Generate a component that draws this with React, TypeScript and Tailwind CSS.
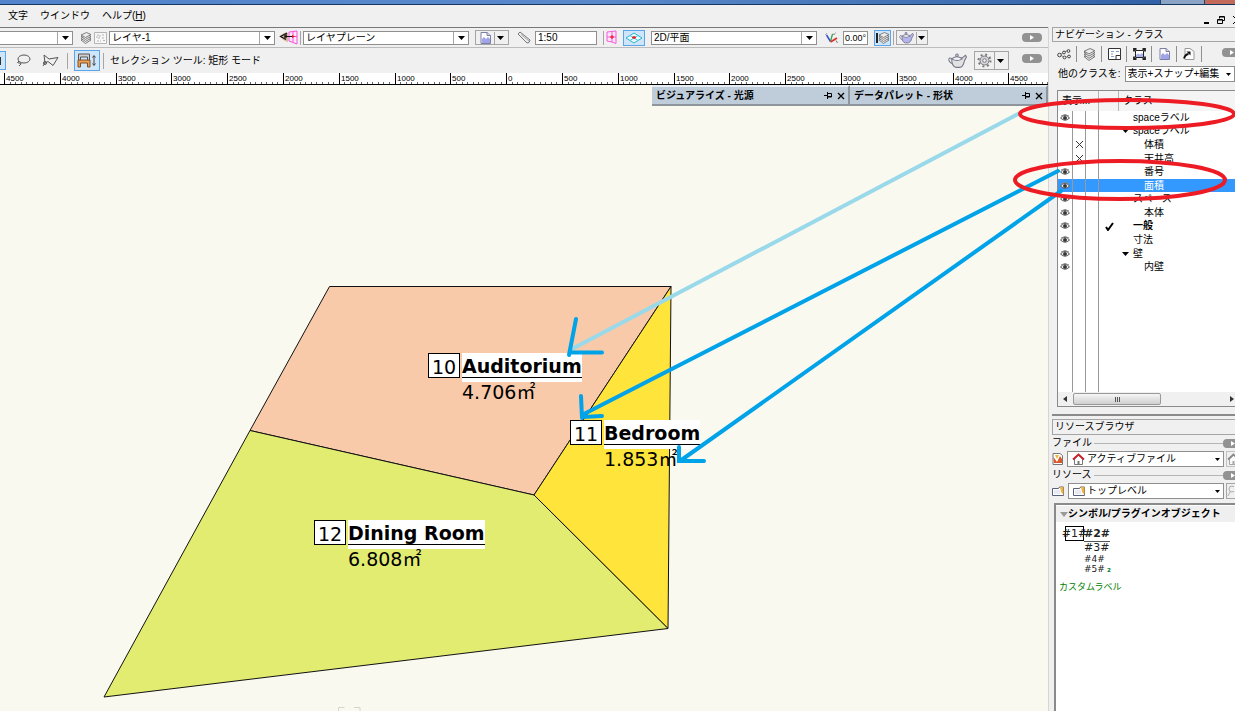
import type { ReactNode } from 'react'

interface Room {
  number: string
  name: string
  area: string
  place: string
}

interface ClassRow {
  name: string
  level: number
  state: 'eye' | 'hidden' | 'none'
  open?: boolean
  active?: boolean
  selected?: boolean
}

const rooms: Room[] = [
  { number: '10', name: 'Auditorium', area: '4.706', place: 'left-[428px] top-[268px]' },
  { number: '11', name: 'Bedroom', area: '1.853', place: 'left-[570px] top-[335px]' },
  { number: '12', name: 'Dining Room', area: '6.808', place: 'left-[314px] top-[435px]' },
]

const classes: ClassRow[] = [
  { name: 'spaceラベル', level: 1, state: 'eye' },
  { name: 'spaceラベル', level: 1, state: 'none', open: true },
  { name: '体積', level: 2, state: 'hidden' },
  { name: '天井高', level: 2, state: 'hidden' },
  { name: '番号', level: 2, state: 'eye' },
  { name: '面積', level: 2, state: 'eye', selected: true },
  { name: 'スペース', level: 1, state: 'eye' },
  { name: '本体', level: 2, state: 'eye' },
  { name: '一般', level: 1, state: 'eye', active: true },
  { name: '寸法', level: 1, state: 'eye' },
  { name: '壁', level: 1, state: 'eye', open: true },
  { name: '内壁', level: 2, state: 'eye' },
]

const rulerLabels = [4500, 4000, 3500, 3000, 2500, 2000, 1500, 1000, 500, 0, 500, 1000, 1500, 2000, 2500, 3000, 3500, 4000, 4500]
const rulerStep = 55.8

function Down({ small }: { small?: boolean }) {
  return (
    <svg width={small ? 5 : 7} height={small ? 3 : 4} viewBox="0 0 7 4" className="shrink-0">
      <path d="M0 0h7L3.5 4z" fill="#000" />
    </svg>
  )
}

function Sep({ className = '' }: { className?: string }) {
  return <span className={`w-px shrink-0 bg-[#a5a5a5] ${className}`} />
}

function Combo({ label, value, className = '', icon, plain }: { label: string; value: string; className?: string; icon?: ReactNode; plain?: boolean }) {
  return (
    <div className={`relative flex items-center border border-[#8f8f8f] bg-white ${className}`}>
      {icon && <span className="ml-1 shrink-0">{icon}</span>}
      <select aria-label={label} className="h-full w-full min-w-0 appearance-none bg-transparent pl-[2px] pr-3 outline-none">
        <option>{value}</option>
      </select>
      <span className={`pointer-events-none absolute inset-y-0 right-0 flex items-center justify-center ${plain ? 'w-3' : 'w-[15px] border-l border-[#a5a5a5]'}`}>
        <Down small={plain} />
      </span>
    </div>
  )
}

function Pill({ className = '' }: { className?: string }) {
  return (
    <button aria-label="展開" className={`flex h-[9px] w-5 shrink-0 items-center justify-center rounded-[4px] bg-[#929292] ${className}`}>
      <svg width="4" height="5" viewBox="0 0 4 5"><path d="M0 0l4 2.5L0 5z" fill="#fff" /></svg>
    </button>
  )
}

function LayersIcon({ size = 12 }: { size?: number }) {
  return (
    <svg width={size} height={size} viewBox="0 0 12 12" fill="#ececec" stroke="#666" strokeWidth=".8">
      <path d="M1 8l6-2.500 4 2.500-5.500 3.500z" />
      <path d="M1 6.200l6-2.500 4 2.500-5.500 3.300z" />
      <path d="M1 4.400l6-2.500 4 2.500-5.500 3z" />
      <path d="M1 3l5.500-2.500L11 2.500 5.500 5.500z" />
    </svg>
  )
}

function SheetIcon() {
  return (
    <svg width="13" height="12" viewBox="0 0 13 12" fill="none" stroke="#b5b5b5">
      <path d="M.5.5h12v11H.5z" fill="#f7f7f7" />
      <path d="M3 3h3v3H3zM8 3h2M8 6h3M3 9h4M9 8.500h3" strokeDasharray="2 1" />
    </svg>
  )
}

function EyePlaneIcon() {
  return (
    <svg width="20" height="15" viewBox="0 0 20 15" fill="none">
      <path d="M1 6q4-5 8-3v9q-5-1-8-6z" fill="#d9b99b" />
      <path d="M10 2l8-1v13l-8-3zM14 1.500V12M10 6.500h8" stroke="#f552d8" fill="#ffe6fb" />
      <path d="M8 3L1.500 6.500 7 9.500" stroke="#111" strokeWidth="1.200" />
      <ellipse cx="6.500" cy="6" rx="1.500" ry="2.500" fill="#333" />
      <path d="M6 6.500h8" stroke="#111" /><path d="M13 5l3 1.500L13 8z" fill="#e11" />
    </svg>
  )
}

function DocIcon() {
  return (
    <svg width="11" height="12" viewBox="0 0 11 12">
      <path d="M1 .5h6l3.500 3v8H1z" fill="#fff" stroke="#7c7fa0" />
      <path d="M2 7l2-2 2 2 2-2 2 2v4H2z" fill="#9fa5e8" />
      <path d="M7 .5v3h3.500" fill="#d6d9ef" stroke="#7c7fa0" />
    </svg>
  )
}

function ScaleIcon() {
  return (
    <svg width="14" height="13" viewBox="0 0 14 13" fill="#eee" stroke="#777">
      <path d="M1 3l2-2 10 8-1 2.500-2 .5z" /><path d="M4 3.500l8 6.500" stroke="#aaa" />
    </svg>
  )
}

function PinkPlaneIcon() {
  return (
    <svg width="11" height="15" viewBox="0 0 11 15" fill="#ffe6fb" stroke="#f25bdc">
      <path d="M1 2l9-1v12.500l-4-1.500-5-1zM6 1.500v10.500M1 7h9" /><path d="M4 7h4M6 5v4" stroke="#e11" />
    </svg>
  )
}

function WorkPlaneIcon() {
  return (
    <svg width="18" height="12" viewBox="0 0 18 12">
      <path d="M9 1l8 5-8 5-8-5z" fill="#e7fbff" stroke="#2ab4d4" />
      <path d="M5 3.500l8 5M13 3.500l-8 5" stroke="#49c4e0" /><path d="M7 5.500h4M9 4v3" stroke="#d22" strokeWidth="1.300" />
    </svg>
  )
}

function AxesIcon() {
  return (
    <svg width="13" height="12" viewBox="0 0 13 12" fill="none">
      <path d="M5.500 9.500L1.500 3" stroke="#3a4fc8" strokeWidth="1.500" />
      <path d="M5.500 9.500L7.500 2" stroke="#27a244" strokeWidth="1.200" />
      <path d="M.5 3l1.500-2M8 1.500l1 1.500 1.500-2.500" stroke="#888" strokeWidth=".8" />
      <path d="M5.500 10l6.500-4" stroke="#d33" strokeWidth="2" /><path d="M11 8.500l1.500 2.500" stroke="#777" />
    </svg>
  )
}

function Teapot({ fill = '#b4b4ee', size = 15 }: { fill?: string; size?: number }) {
  return (
    <svg width={size} height={size - 2} viewBox="0 0 18 15" stroke="#77778a" fill={fill}>
      <path d="M4 6Q1 4 .8 6.500T5 11" fill="none" />
      <path d="M3.500 6q0 7 4 8h4q3-1 4-6l2-4-1-1.500-3 2.500z" />
      <path d="M3.500 6q5-4 10 0-5 3-10 0z" fill="#f2f2f8" /><circle cx="8.500" cy="2.500" r="1.200" />
    </svg>
  )
}

function GearIcon() {
  return (
    <svg width="15" height="15" viewBox="0 0 15 15" fill="none" stroke="#77777d">
      <circle cx="7.500" cy="7.500" r="6" strokeWidth="2" strokeDasharray="1.900 2.812" />
      <circle cx="7.500" cy="7.500" r="4.500" fill="#d5d5da" /><circle cx="7.500" cy="7.500" r="1.800" fill="#f7f7f7" />
    </svg>
  )
}

function Eye() {
  return (
    <svg width="10" height="8" viewBox="0 0 10 8" fill="none" stroke="#555" className="mx-auto">
      <path d="M.5 4Q5-1.500 9.500 4 5 8.500.5 4z" fill="#ececec" /><circle cx="5" cy="4" r="1.600" fill="#333" /><path d="M1 2q4-3 8 0" stroke="#888" />
    </svg>
  )
}

function Folder() {
  return (
    <svg width="12" height="10" viewBox="0 0 12 10">
      <path d="M.5 2.500h6l1-1.500h4v8.500H.5z" fill="#fff" stroke="#58607c" /><path d="M8 1h3.500v8L9 6z" fill="#efb442" /><path d="M2 4h6v4H2z" fill="#e7e9f4" />
    </svg>
  )
}

function House() {
  return (
    <svg width="13" height="12" viewBox="0 0 13 12">
      <path d="M2.500 6v5.500h8V6L6.500 2z" fill="#fff" stroke="#777" /><path d="M1 6.500l5.500-5 5.500 5" fill="none" stroke="#c9202a" strokeWidth="1.800" /><path d="M5.500 8h2v3.500h-2z" fill="#777" />
    </svg>
  )
}

function Palette({ title, className }: { title: string; className: string }) {
  return (
    <div className={`flex items-center border-b-2 border-r-2 border-t-2 border-b-[#8e959c] border-r-[#8e959c] border-t-[#e8edf2] bg-[#bfcddb] pl-1 pr-[3px] text-[10px] font-bold ${className}`}>
      <span className="flex-1 whitespace-nowrap">{title}</span>
      <button aria-label="ピン">
        <svg width="9" height="7" viewBox="0 0 9 7" fill="none" stroke="#000"><path d="M0 3.500h3M3.500 0v7M3.500 1.500h4v3.500h-4M4 4.500h4" /></svg>
      </button>
      <button aria-label="閉じる" className="ml-1">
        <svg width="8" height="8" viewBox="0 0 8 8" stroke="#000" strokeWidth="1.300"><path d="M1 1l6 6M7 1L1 7" /></svg>
      </button>
    </div>
  )
}

function Toolbar() {
  return (
    <div className="flex h-5 items-center border-b border-[#bcbcbc]">
      <Combo label="クラス" value="" className="h-[14px] w-[73px] border-l-0" />
      <span className="ml-[7px]"><LayersIcon /></span>
      <span className="ml-[2px]"><SheetIcon /></span>
      <Combo label="レイヤ" value="レイヤ-1" className="ml-[2px] h-[14px] w-[166px]" />
      <span className="ml-1"><EyePlaneIcon /></span>
      <Sep className="ml-px h-[14px]" />
      <Combo label="プレーン" value="レイヤプレーン" className="ml-[2px] h-[14px] w-[166px]" />
      <button aria-label="ビュー" className="ml-[6px] flex h-[15px] w-[34px] items-center justify-between border border-[#a5a5a5] pl-1 pr-1">
        <DocIcon /><Sep className="h-3" /><Down />
      </button>
      <span className="ml-2"><ScaleIcon /></span>
      <input aria-label="縮尺" defaultValue="1:50" className="ml-1 h-[14px] w-[62px] border border-[#8f8f8f] bg-white pl-[2px] outline-none" />
      <Sep className="ml-[6px] h-[14px]" />
      <span className="ml-[2px]"><PinkPlaneIcon /></span>
      <button aria-label="ワーキングプレーン" className="ml-[6px] flex h-4 w-[22px] items-center justify-center border border-[#5aa5ea] bg-[#cfe5fa]"><WorkPlaneIcon /></button>
      <Combo label="投影" value="2D/平面" className="ml-[6px] h-[14px] w-[166px]" />
      <span className="ml-2"><AxesIcon /></span>
      <input aria-label="角度" defaultValue="0.00°" className="ml-[5px] h-[14px] w-[25px] border border-[#8f8f8f] bg-white pl-px text-[9px] outline-none" />
      <button aria-label="重ね" className="ml-[6px] flex h-4 w-[17px] items-center justify-center border border-[#5aa5ea] bg-[#cfe5fa]">
        <span className="h-[10px] w-[2px] bg-[#222]" /><LayersIcon size={12} />
      </button>
      <Sep className="ml-[2px] h-[14px]" />
      <button aria-label="レンダリング" className="ml-[2px] flex h-[15px] w-[32px] items-center justify-between border border-[#a5a5a5] px-[2px]">
        <Teapot size={15} /><Sep className="h-3" /><Down />
      </button>
      <Pill className="ml-auto mr-[6px]" />
    </div>
  )
}

function ModeBar() {
  return (
    <div className="flex h-[25px] items-center">
      <button aria-label="単一選択" className="flex h-[19px] w-[6px] items-center border border-l-0 border-[#5aa5ea] bg-[#cfe5fa]"><span className="h-2 w-px bg-[#333]" /></button>
      <button aria-label="投げ縄" className="ml-[10px]">
        <svg width="15" height="13" viewBox="0 0 15 13" fill="none" stroke="#555"><ellipse cx="8" cy="5" rx="6" ry="4" /><path d="M3 7q-3 2 0 2t2 1-2 2" /></svg>
      </button>
      <button aria-label="多角形選択" className="ml-[11px]">
        <svg width="17" height="13" viewBox="0 0 17 13" fill="none" stroke="#555"><path d="M3 9L2 1l5 4 9-1.500-5 8-5-4-3 1.500-2 3" /><circle cx="3" cy="9" r="1.500" /></svg>
      </button>
      <Sep className="ml-2 h-4" />
      <button aria-label="矩形モード" className="ml-[6px] flex h-[21px] w-[26px] items-center justify-center border border-[#5aa5ea] bg-[#cfe5fa]">
        <svg width="20" height="15" viewBox="0 0 20 15" fill="none">
          <path d="M1.500 1h11v7h-2V4h-7v4h-2z" fill="#cfcfcf" stroke="#555" />
          <path d="M1 7h12v7h-2.500v-4h-7v4H1z" fill="#f0a050" stroke="#7a5230" />
          <path d="M17 3v9M15.500 4.500L17 2.500l1.500 2M15.500 10.500l1.500 2 1.500-2" stroke="#444" />
        </svg>
      </button>
      <Sep className="ml-[3px] h-4" />
      <span className="ml-[6px] whitespace-nowrap">セレクション ツール: 矩形 モード</span>
      <span className="ml-auto"><Teapot fill="#e2e2e2" size={19} /></span>
      <button aria-label="設定" className="ml-[7px] flex h-[19px] w-[35px] items-center justify-between border border-[#a5a5a5] pl-[2px] pr-1">
        <GearIcon /><Sep className="h-[17px]" /><Down />
      </button>
      <Pill className="mb-1 ml-[13px] mr-[6px]" />
    </div>
  )
}

function Ruler() {
  return (
    <svg className="block h-3 w-full bg-white" fontFamily="Liberation Sans, sans-serif" fontSize="8">
      {Array.from({ length: 190 }, (_, i) => (
        <path key={i} d={`M${Math.round(4 + i * (rulerStep / 10)) + 0.5} 9v2`} stroke="#666" />
      ))}
      {rulerLabels.map((label, i) => {
        const x = Math.round(4 + i * rulerStep)
        return (
          <g key={i}>
            <path d={`M${x + 0.5} 0v11`} stroke="#000" />
            <text x={x + 2} y="8">{label}</text>
          </g>
        )
      })}
      <rect y="11" width="100%" height="1" />
    </svg>
  )
}

function Drawing() {
  return (
    <section className="relative min-h-0 flex-1 overflow-hidden bg-[#f9f9f0]">
      <svg className="absolute inset-0 h-full w-full" stroke="#111" strokeWidth="1">
        <path d="M329.500 201.500H671L534 410 250 345.500z" fill="#f8caaa" />
        <path d="M671 201.500L668 543.500 534 410z" fill="#ffe53b" />
        <path d="M250 345.500L534 410l134 133.500L104 612z" fill="#e2ec70" />
        <path d="M338.500 626v-3.500h6M354 622.500h6v3.500" fill="none" stroke="#d5d5ce" />
      </svg>
      {rooms.map((room) => (
        <div key={room.number} className={`absolute flex gap-[2px] font-["DejaVu_Sans","Noto_Sans_CJK_JP",sans-serif] text-[19px] ${room.place}`}>
          <span className="flex h-[25px] w-8 items-center justify-center border border-black bg-white pt-[2px] leading-5">{room.number}</span>
          <div className="whitespace-nowrap">
            <div className="h-[29px] bg-white pt-[2px]">
              <div className="border-b border-black font-bold leading-[22px]">{room.name}</div>
            </div>
            <div className="h-5 leading-[18px]">
              {room.area}<span className='font-["Noto_Sans_CJK_JP",sans-serif]'>㎡</span>
            </div>
          </div>
        </div>
      ))}
      <div className="absolute right-0 top-0 flex h-[21px]">
        <Palette title="ビジュアライズ - 光源" className="w-[198px]" />
        <Palette title="データパレット - 形状" className="w-[198px]" />
      </div>
    </section>
  )
}

function ClassTable() {
  return (
    <div className="ml-[5px] flex h-[317px] flex-col border-l border-t border-[#8a8a8a] bg-white">
      <table className="h-[183px] w-full table-fixed border-separate border-spacing-0 text-left text-[10px] leading-3">
        <colgroup>
          <col className="w-[15px]" /><col className="w-[13px]" /><col className="w-[13px]" /><col className="w-5" /><col />
        </colgroup>
        <thead>
          <tr className="h-5 bg-[#f4f4f4]">
            <th colSpan={3} className="border-r border-[#b5b5b5] p-0 pl-1 font-normal">表示...</th>
            <th className="border-r border-[#b5b5b5] p-0" />
            <th className="p-0 pl-1 font-normal">クラス</th>
          </tr>
        </thead>
        <tbody>
          {classes.map((row, i) => (
            <tr key={i} className={row.selected ? 'bg-[#3399ff] text-white' : ''}>
              <td className="border-r border-[#999] p-0">{row.state === 'eye' && <Eye />}</td>
              <td className="border-r border-[#999] p-0">
                {row.state === 'hidden' && (
                  <svg width="7" height="7" viewBox="0 0 7 7" stroke="#333" className="mx-auto"><path d="M0 0l7 7M7 0L0 7" /></svg>
                )}
              </td>
              <td className="border-r border-[#999] p-0" />
              <td className="p-0">
                {row.active && (
                  <svg width="9" height="9" viewBox="0 0 9 9" fill="none" stroke="#000" strokeWidth="2" className="mx-auto"><path d="M1 5l2 3 5-7" /></svg>
                )}
              </td>
              <td className="p-0">
                <span className={`flex items-center ${row.level === 2 ? 'pl-[25px]' : 'pl-[3px]'} ${row.active ? 'font-bold' : ''}`}>
                  {row.level === 1 && <span className="w-[11px]">{row.open && <Down />}</span>}
                  {row.name}
                </span>
              </td>
            </tr>
          ))}
        </tbody>
      </table>
      <div className="flex flex-1">
        <span className="w-[15px] border-r border-[#999]" />
        <span className="w-[13px] border-r border-[#999]" />
        <span className="w-[13px] border-r border-[#999]" />
      </div>
      <div className="flex h-[14px] items-center bg-[#f0f0f0] px-[5px]">
        <svg width="4" height="6" viewBox="0 0 4 6"><path d="M4 0v6L0 3z" fill="#333" /></svg>
        <span className="ml-[6px] flex h-3 w-[88px] items-center justify-center gap-px rounded-[2px] border border-[#999] bg-gradient-to-b from-[#f6f6f6] to-[#cfcfcf]">
          <i className="h-[5px] w-px bg-[#555]" /><i className="h-[5px] w-px bg-[#555]" /><i className="h-[5px] w-px bg-[#555]" />
        </span>
        <svg width="4" height="6" viewBox="0 0 4 6" className="ml-auto mr-[-4px]"><path d="M0 0v6l4-3z" fill="#333" /></svg>
      </div>
      <div className="h-px bg-[#8a8a8a]" />
    </div>
  )
}

function NavTabs() {
  const tabs: { label: string; icon: ReactNode }[] = [
    { label: 'クラス', icon: <svg width="14" height="11" viewBox="0 0 14 11" fill="#eee" stroke="#444"><path d="M3 6l4-3 4-1.500M3 6l5 2.500 4-1.500" fill="none" stroke="#888" /><circle cx="2.500" cy="6" r="1.800" /><circle cx="7" cy="3.500" r="1.400" /><circle cx="11.500" cy="2" r="1.400" /><circle cx="7.500" cy="8.500" r="1.400" /><circle cx="12" cy="7.500" r="1.400" /></svg> },
    { label: 'レイヤ', icon: <LayersIcon size={13} /> },
    { label: 'シート', icon: <svg width="13" height="12" viewBox="0 0 13 12" fill="#fff" stroke="#333"><path d="M.5.5h12v11H.5z" /><path d="M3 3.500h3M8 3.500h3M3 6h2M3 8.500h3" stroke="#7ba3cf" /><path d="M8 7.500h4.500v4H8z" /></svg> },
    { label: 'ビューポート', icon: <svg width="13" height="12" viewBox="0 0 13 12" fill="none" stroke="#222"><path d="M2.500 2.500h8v7h-8z" fill="#fff" /><path d="M3 9V7l2-1.500 2 1 2-1.500 1 1v3z" fill="#a9b0ea" stroke="none" /><path d="M1 3.500V1h2.500M9.500 1H12v2.500M12 8.500V11H9.500M3.500 11H1V8.500" strokeWidth="1.800" /></svg> },
    { label: '登録画面', icon: <DocIcon /> },
    { label: '参照', icon: <svg width="12" height="12" viewBox="0 0 12 12" fill="none" stroke="#999"><path d="M2 .5h5l4 3v8H2z" fill="#fff" /><path d="M1 10.500q1-4 4.500-4.500" stroke="#111" strokeWidth="1.800" /><path d="M3.500 3.500h4v4z" fill="#111" stroke="none" /></svg> },
  ]
  return (
    <div className="flex h-[24px] items-center">
      {tabs.map((tab) => (
        <button key={tab.label} aria-label={tab.label} className="flex h-4 w-[25px] shrink-0 items-center justify-center border-r border-[#8f8f8f]">{tab.icon}</button>
      ))}
      <Pill className="mb-1 ml-5" />
    </div>
  )
}

function GroupLine({ title }: { title: string }) {
  return (
    <div className="flex h-4 items-center whitespace-nowrap">
      {title}
      <span className="ml-[2px] h-px flex-1 bg-[#b5b5b5]" />
      <Pill className="mr-[-8px]" />
    </div>
  )
}

function ResourceBrowser() {
  return (
    <>
      <div className="mt-[7px] border-t-2 border-[#8a8a8a] pt-[3px]">
        <h2 className="h-4 whitespace-nowrap border border-r-0 border-[#a5a5a5] pl-[2px] leading-[14px]">リソースブラウザ</h2>
      </div>
      <GroupLine title="ファイル" />
      <div className="flex h-4 items-center">
        <svg width="11" height="12" viewBox="0 0 11 12"><path d="M1 .5h7l2.500 2v9H1z" fill="#fff" stroke="#777" /><path d="M1.500 4L5 9l3-6 2 3v4H2z" fill="#d7582a" /><path d="M3 2l2 4 2-4z" fill="#f1b938" /></svg>
        <Combo label="ファイル" value="アクティブファイル" icon={<House />} plain className="ml-1 h-4 flex-1" />
        <button aria-label="ホーム" className="ml-[2px] h-4 w-[9px] overflow-hidden border border-r-0 border-[#a5a5a5] opacity-60 grayscale"><House /></button>
      </div>
      <GroupLine title="リソース" />
      <div className="flex h-4 items-center">
        <Folder />
        <Combo label="リソース" value="トップレベル" icon={<Folder />} plain className="ml-1 h-4 flex-1" />
        <button aria-label="検索" className="ml-[2px] h-4 w-[9px] border border-r-0 border-[#a5a5a5]">
          <svg width="7" height="12" viewBox="0 0 7 12" fill="none" stroke="#aaa"><circle cx="5" cy="4" r="3" /><path d="M3 7l-2 4" /></svg>
        </button>
      </div>
      <div className="ml-[2px] mt-1 flex-1 border-l-2 border-t-2 border-[#8a8a8a] bg-white pt-px">
        <h3 className="flex h-4 items-center whitespace-nowrap bg-[#efefef] pl-1 font-bold">
          <svg width="8" height="5" viewBox="0 0 8 5"><path d="M0 0h8L4 5z" fill="#999" /></svg>
          シンボル/プラグインオブジェクト
        </h3>
        <div className="flex pl-[9px] pt-1 font-['DejaVu_Sans',sans-serif] text-[#222]">
          <span className="flex h-[15px] w-[19px] items-center justify-center border border-black text-[11px]">#1#</span>
          <div className="flex flex-col items-start">
            <span className="border-b border-[#555] text-[11px] font-bold leading-[15px]">#2#</span>
            <span className="text-[11px] leading-3">#3#</span>
            <span className="text-[9px] leading-[10px]">#4#</span>
            <span className="text-[9px] leading-[10px]">#5#</span>
          </div>
          <span className="self-end text-[9px] font-bold leading-[9px] text-green-700 ml-[-3px]">₂</span>
        </div>
        <p className="whitespace-nowrap pl-[3px] pt-[7px] text-[9px] text-[#008000]">カスタムラベル</p>
      </div>
    </>
  )
}

// Ellipses and arrows that tie the class rows to the room labels
function Markup() {
  return (
    <svg className="pointer-events-none absolute inset-0 h-full w-full" fill="none" strokeLinecap="round">
      <path d="M1018 114L572 349" stroke="#99d9ea" strokeWidth="4" />
      <g stroke="#00a2e8" strokeWidth="4">
        <path d="M576 319l-7 36M571 352.500h31" />
        <path d="M1058 171L582 415M581 396l1 22M582 417l20-1" />
        <path d="M1061 191L680 461M679 447v14h25" />
      </g>
      <g stroke="#ed1c24" strokeWidth="4">
        <ellipse cx="1127" cy="114" rx="107" ry="14" />
        <ellipse cx="1120" cy="180" rx="105" ry="19" />
      </g>
    </svg>
  )
}

export default function App() {
  return (
    <div className='relative flex h-screen flex-col overflow-hidden bg-[#f0f0f0] font-["Liberation_Sans","Noto_Sans_CJK_JP",sans-serif] text-[10px] leading-3 text-black'>
      <div className="flex h-[5px] justify-end border-b border-[#17365f] bg-gradient-to-r from-[#5184cc] via-[#5a89cb] to-[#2c5da0]">
        <span className="w-[45px] border-x border-[#26436b] bg-[#8ba4c6]" />
        <span className="w-[30px] bg-[#c46a5a]" />
      </div>
      <nav className="flex h-[22px] items-center pl-2">
        <button>文字</button>
        <button className="ml-3">ウインドウ</button>
        <button className="ml-3">ヘルプ(<u>H</u>)</button>
        <span className="ml-auto flex items-end gap-2 self-end pb-[3px]">
          <button aria-label="最小化"><svg width="5" height="8" viewBox="0 0 5 8"><path d="M0 6h5v2H0z" /></svg></button>
          <button aria-label="元に戻す"><svg width="8" height="8" viewBox="0 0 8 8" fill="none" stroke="#000"><path d="M2.500 2.500v-2h5v4h-2M.5 3.500h5v4h-5zM2 1h5M1 4h4" /></svg></button>
          <button aria-label="閉じる" className="w-[2px] overflow-hidden"><svg width="8" height="8" viewBox="0 0 8 8" stroke="#000"><path d="M0 0l8 8M8 0L0 8" /></svg></button>
        </span>
      </nav>
      <div className="flex min-h-0 flex-1">
        <main className="flex min-w-0 flex-1 flex-col border-t border-[#777]">
          <Toolbar />
          <ModeBar />
          <Ruler />
          <Drawing />
        </main>
        <aside className="flex w-[187px] shrink-0 flex-col overflow-hidden border-l border-[#d5d5d5] pl-[3px]">
          <h2 className="h-[15px] whitespace-nowrap border border-r-0 border-[#a5a5a5] pl-[2px] leading-[13px]">ナビゲーション - クラス</h2>
          <NavTabs />
          <div className="mb-2 flex h-4 items-center gap-1 whitespace-nowrap pl-[6px]">
            <span>他のクラスを:</span>
            <Combo label="他のクラスを" value="表示+スナップ+編集" plain className="h-4 flex-1" />
          </div>
          <ClassTable />
          <ResourceBrowser />
        </aside>
      </div>
      <Markup />
    </div>
  )
}
